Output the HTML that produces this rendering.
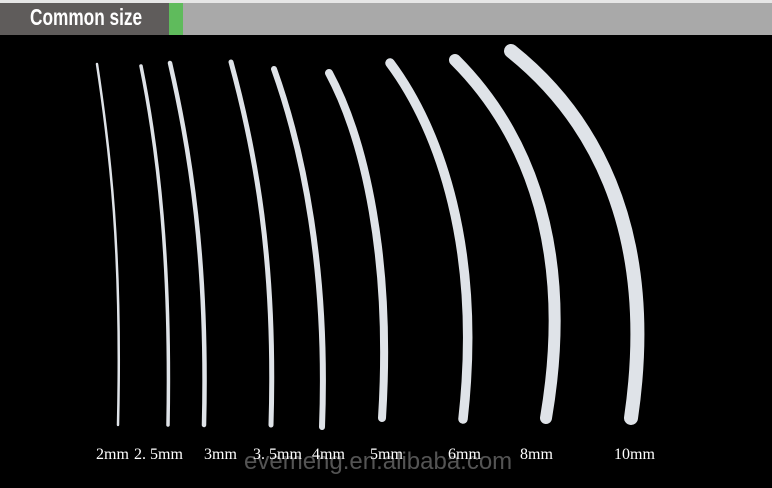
<!DOCTYPE html>
<html><head><style>
html,body{margin:0;padding:0;background:#000;width:772px;height:488px;overflow:hidden;font-family:"Liberation Sans",sans-serif}
.top{position:absolute;left:0;top:0;width:772px;height:3px;background:#e6e6e6}
.bar{position:absolute;left:0;top:3px;width:772px;height:32px;background:#a9a9a9}
.lab{position:absolute;left:0;top:3px;width:169px;height:32px;background:#5f5c5b}
.gr{position:absolute;left:169px;top:3px;width:14px;height:32px;background:#5fbb5c}
.t{position:absolute;left:30px;top:4px;color:#fff;font-size:23px;font-weight:bold;transform:scaleX(0.75);transform-origin:left;white-space:nowrap}
svg{position:absolute;left:0;top:0}
.s{position:absolute;top:446px;color:#fff;font-family:"Liberation Serif",serif;font-size:16px}
.wm{position:absolute;left:244px;top:448px;color:#6a6a6a;font-size:24px;opacity:.8}
</style></head><body>
<div class="top"></div><div class="bar"></div><div class="lab"></div><div class="gr"></div>
<div class="t">Common size</div>
<svg width="772" height="488" fill="none" stroke="#dfe3e8" stroke-linecap="round">
<path d="M97 64 C110 150 122 250 118 425" stroke-width="2.5"/>
<path d="M141 66 C158 150 171 260 168 425" stroke-width="3.5"/>
<path d="M170 63 C190 150 208 260 204 425" stroke-width="4.5"/>
<path d="M231 62 C255 150 276 260 271 425" stroke-width="5"/>
<path d="M274 69 C303 150 328 270 322 427" stroke-width="6"/>
<path d="M329 73 C365 140 392 260 382 418" stroke-width="8"/>
<path d="M390 63 C440 130 482 250 463 419" stroke-width="9.5"/>
<path d="M455 60 C515 120 578 230 546 418" stroke-width="12"/>
<path d="M511 51 C585 110 660 220 631 418" stroke-width="14"/>
</svg>
<div class="wm">evemeng.en.alibaba.com</div>
<span class="s" style="left:96px">2mm</span>
<span class="s" style="left:134px">2. 5mm</span>
<span class="s" style="left:204px">3mm</span>
<span class="s" style="left:253px">3. 5mm</span>
<span class="s" style="left:312px">4mm</span>
<span class="s" style="left:370px">5mm</span>
<span class="s" style="left:448px">6mm</span>
<span class="s" style="left:520px">8mm</span>
<span class="s" style="left:614px">10mm</span>
</body></html>
